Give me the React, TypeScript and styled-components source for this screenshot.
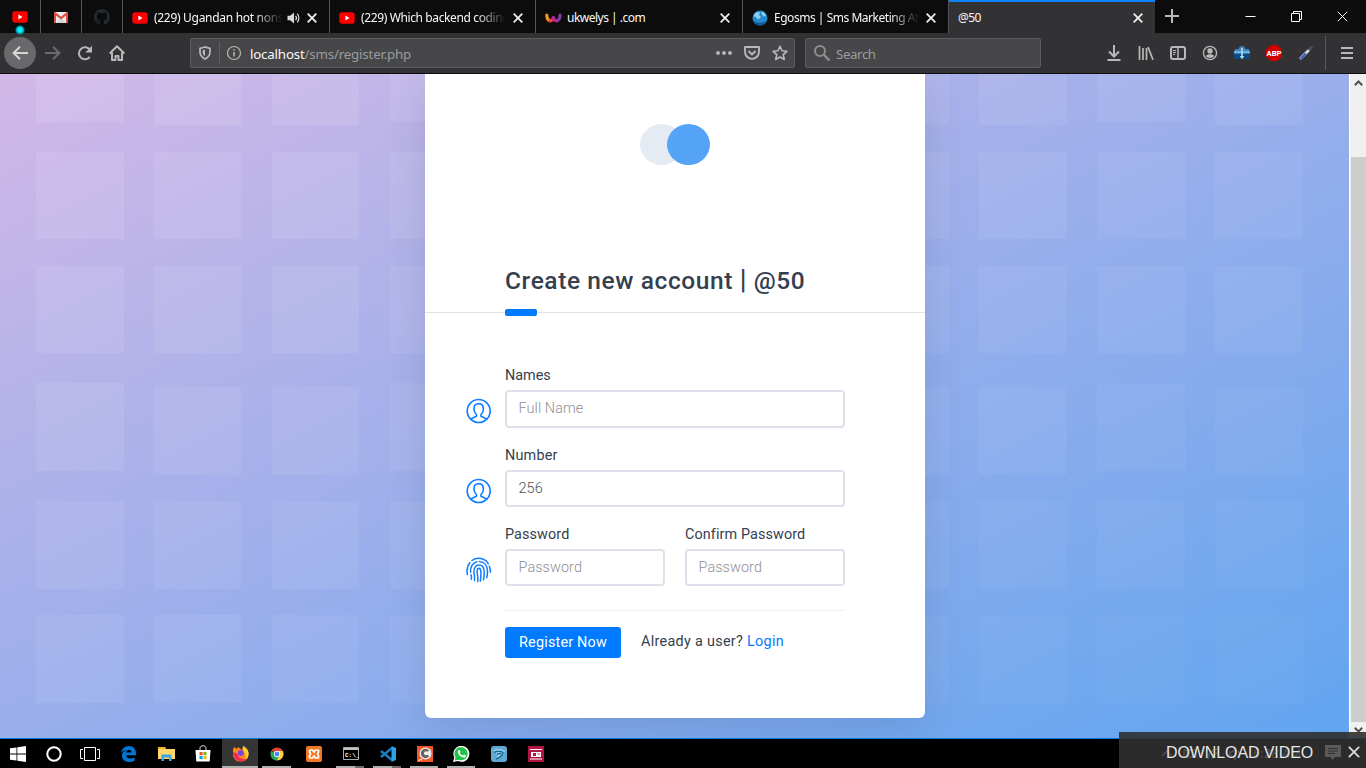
import React from "react";
import styled, { createGlobalStyle, css } from "styled-components";

const GlobalStyle = createGlobalStyle`
  * { box-sizing: border-box; }
  html, body { margin: 0; padding: 0; overflow: hidden; }
  svg { display: block; flex: none; }
`;

const uiFont = `"Noto Sans", "Open Sans", sans-serif`;

const Screen = styled.div`
  width: 1366px;
  height: 768px;
  display: flex;
  flex-direction: column;
  position: relative;
  overflow: hidden;
  font-family: ${uiFont};
`;

/* ---------- tab strip ---------- */

const TabStrip = styled.div`
  height: 33px;
  flex: none;
  display: flex;
  background: #0c0c0d;
`;

const PinnedTab = styled.div`
  width: 41px;
  border-right: 1px solid #565658;
  display: flex;
  align-items: center;
  justify-content: center;
  padding-top: 1px;
  position: relative;
`;

const PinnedDot = styled.i`
  position: absolute;
  left: 15px;
  top: 25px;
  width: 10px;
  height: 10px;
  border-radius: 50%;
  background: radial-gradient(circle, #00f0ff 0 30%, #008c99 55%, transparent 72%);
`;

const Tab = styled.div<{ $width: number; $active?: boolean }>`
  width: ${(p) => p.$width}px;
  display: flex;
  align-items: center;
  padding: 2px 12px 0 9px;
  border-right: 1px solid #565658;
  ${(p) =>
    p.$active &&
    css`
      background: #323234;
      border-right: 0;
      box-shadow: inset 0 2px #0a84ff;
    `}
`;

const TabTitle = styled.span<{ $fade?: boolean; $spacing?: number; $gap?: number }>`
  flex: 1;
  min-width: 0;
  margin-right: ${(p) => p.$gap ?? 0}px;
  overflow: hidden;
  white-space: nowrap;
  font-size: 12px;
  line-height: 18px;
  color: #f9f9fa;
  letter-spacing: ${(p) => p.$spacing ?? -0.3}px;
  ${(p) => p.$fade && css`mask-image: linear-gradient(to left, transparent, #000 30px);`}
`;

const TabIcon = styled.span`
  width: 16px;
  margin-right: 6px;
  display: flex;
  justify-content: center;
  flex: none;
`;

const SpeakerSlot = styled.span`
  padding: 0 6px 0 4px;
`;

const WindowControls = styled.div`
  margin-left: auto;
  display: flex;
  align-items: center;
  gap: 35px;
  padding: 0 18px 1px 0;
`;

const NewTab = styled.div`
  padding: 9px 0 0 10px;
`;

/* ---------- navigation bar ---------- */

const NavBar = styled.div`
  height: 41px;
  flex: none;
  display: flex;
  align-items: center;
  background: #323234;
  border-bottom: 1px solid #0c0c0d;
`;

const NavButtons = styled.div`
  width: 190px;
  padding-left: 4px;
  display: flex;
  align-items: center;
`;

const BackButton = styled.div`
  width: 32px;
  height: 32px;
  border-radius: 50%;
  background: #69696b;
  display: flex;
  align-items: center;
  justify-content: center;
  margin-right: 8px;
`;

const NavIcon = styled.div<{ $width?: number }>`
  width: ${(p) => p.$width ?? 32}px;
  display: flex;
  justify-content: center;
`;

const Field = styled.div<{ $width: number; $search?: boolean }>`
  width: ${(p) => p.$width}px;
  height: 30px;
  display: flex;
  align-items: center;
  background: #474749;
  border: 1px solid #5d5d5f;
  border-radius: 2px;
  padding: 0 6px 0 8px;
  margin-left: ${(p) => (p.$search ? 10 : 0)}px;
  font-size: 13.3px;
  color: #9c9c9e;
`;

const FieldDivider = styled.i`
  width: 1px;
  height: 22px;
  background: #5c6063;
  margin: 0 6px 0 8px;
`;

const Url = styled.span`
  flex: 1;
  margin-left: 8px;
  padding-top: 2px;
  letter-spacing: -0.18px;
  em { font-style: normal; color: #f9f9fa; }
`;

const UrlActions = styled.div`
  display: flex;
  align-items: center;
  gap: 12px;
`;

const SearchHint = styled.span`
  margin-left: 6px;
  padding-top: 2px;
  letter-spacing: -0.4px;
`;

const Toolbar = styled.div`
  margin-left: auto;
  display: flex;
  align-items: center;
`;

const MenuSlot = styled.div`
  height: 34px;
  border-left: 1px solid #5a5a5c;
  margin-left: 3px;
  padding: 0 13px 0 15px;
  display: flex;
  align-items: center;
`;

/* ---------- web page ---------- */

const Viewport = styled.div`
  height: 664px;
  flex: none;
  display: flex;
`;

const Page = styled.main`
  width: 1349px;
  display: grid;
  overflow: hidden;
  background: linear-gradient(to bottom right, #d2b8e7, #61a5f0);
  > * { grid-area: 1 / 1; }
`;

const Pattern = styled.div`
  display: flex;
  gap: 30.3px;
  padding-left: 36px;
`;

const PatternColumn = styled.div`
  width: 87.6px;
  flex: none;
`;

const Square = styled.div<{ $gap: number; $height: number; $alpha: number }>`
  margin-top: ${(p) => p.$gap}px;
  height: ${(p) => p.$height}px;
  background: rgba(255, 255, 255, ${(p) => p.$alpha});
`;

const Card = styled.section`
  width: 500px;
  height: 644px;
  margin-left: 425px;
  background: #fff;
  border-radius: 0 0 6px 6px;
  box-shadow: 0 10px 40px rgba(40, 50, 90, 0.15);
  font-family: Roboto, sans-serif;
  color: #35404f;
  z-index: 1;
`;

const CardHeader = styled.header`
  height: 239px;
  border-bottom: 1px solid #e2e3e5;
  display: flex;
  flex-direction: column;
  padding: 50px 80px 0;
`;

const Logo = styled.div`
  align-self: center;
  flex: none;
  height: 139px;
`;

const Title = styled.h1`
  margin: 0;
  flex: none;
  height: 38px;
  font-size: 24.5px;
  font-weight: 500;
  line-height: 36px;
  letter-spacing: 0.6px;
  white-space: nowrap;
`;

const Pipe = styled.span`
  font-size: 27px;
  line-height: 0;
`;

const Accent = styled.i`
  display: block;
  flex: none;
  width: 32px;
  height: 7px;
  margin-top: 8px;
  border-radius: 2px;
  background: #007bff;
`;

const Form = styled.div`
  padding: 50px 80px 0 41px;
`;

const FormRow = styled.div<{ $height: number }>`
  height: ${(p) => p.$height}px;
  display: flex;
  gap: 20px;
`;

const RowIcon = styled.div`
  width: 26px;
  margin-right: -7px;
  padding-top: 35px;
`;

const Control = styled.label`
  flex: 1;
  min-width: 0;
  display: flex;
  flex-direction: column;
`;

const LabelText = styled.span<{ $spacing: number }>`
  font-size: 14.4px;
  line-height: 22px;
  padding-top: 2px;
  margin-bottom: 3px;
  white-space: nowrap;
  letter-spacing: ${(p) => p.$spacing}px;
`;

const Input = styled.input<{ $height?: number; $spacing?: number }>`
  width: 100%;
  height: ${(p) => p.$height ?? 37}px;
  border: 2px solid #dde1ec;
  border-radius: 4px;
  padding: 0 12px 1px 11.5px;
  outline: 0;
  background: #fff;
  color: #495057;
  font: 300 14.4px Roboto, sans-serif;
  letter-spacing: ${(p) => p.$spacing ?? 0.1}px;
  &::placeholder { color: #8f8f93; opacity: 1; }
`;

const Actions = styled.div`
  margin-left: 39px;
  border-top: 1px solid #eeeff1;
  padding-top: 16px;
  display: flex;
  font-size: 14.4px;
`;

const Submit = styled.button`
  width: 116px;
  height: 31px;
  border: 0;
  border-radius: 3px;
  background: #007bff;
  color: #fff;
  padding: 0;
  font: 400 14.4px Roboto, sans-serif;
  letter-spacing: 0.2px;
`;

const LoginHint = styled.p`
  margin: 0 0 0 20px;
  line-height: 29px;
  letter-spacing: 0.3px;
  a { color: #007bff; }
`;

const Scrollbar = styled.div`
  width: 17px;
  background: #f0f0f0;
  border-left: 1px solid #fff;
  display: flex;
  flex-direction: column;
  align-items: center;
  justify-content: space-between;
  padding: 6px 0 5px;
`;

const Thumb = styled.div`
  width: 15px;
  height: 565px;
  margin-top: 65px;
  background: #cdcdcd;
`;

/* ---------- taskbar ---------- */

const Taskbar = styled.footer`
  height: 30px;
  background: #000;
  border-top: 1px solid #0078d7;
  display: flex;
`;

const TaskItem = styled.div<{ $width?: number; $active?: boolean; $running?: boolean; $stacked?: boolean }>`
  width: ${(p) => p.$width ?? 37}px;
  flex: none;
  display: flex;
  align-items: center;
  justify-content: center;
  position: relative;
  ${(p) => p.$active && css`background: #353535;`}
  ${(p) =>
    (p.$running || p.$active) &&
    css`
      &::after {
        content: "";
        position: absolute;
        bottom: 0;
        left: ${p.$active ? 0 : 4}px;
        right: ${p.$active ? 0 : 5}px;
        height: 2px;
        background: ${p.$stacked ? "linear-gradient(to right, #b0b0b0 19px, #6c6c6c 19px)" : "#b0b0b0"};
      }
    `}
`;

const DownloadBar = styled.div`
  position: absolute;
  right: 0;
  bottom: 0;
  width: 247px;
  height: 36px;
  background: rgba(48, 48, 48, 0.9);
`;

const Tray = styled.div`
  position: absolute;
  left: 42px;
  top: 13px;
  display: flex;
  align-items: center;
  gap: 10px;
  color: #505050;
  font-size: 12px;
  line-height: 17px;
  letter-spacing: 0.4px;
`;

const DownloadLabel = styled.div`
  position: absolute;
  left: 47px;
  top: 10px;
  font: 16px/22px "Liberation Sans", sans-serif;
  letter-spacing: -0.1px;
  color: #e6e6e6;
  white-space: nowrap;
`;

const DownloadIcons = styled.div`
  position: absolute;
  right: 6px;
  top: 12px;
  display: flex;
  align-items: center;
  gap: 7px;
`;

/* ---------- icons ---------- */

const Cross = ({ size = 10, color = "#eee", width = 1.8 }: { size?: number; color?: string; width?: number }) => (
  <svg width={size} height={size} viewBox="0 0 10 10" stroke={color} strokeWidth={width} fill="none">
    <path d="M.7.7l8.6 8.6M9.3.7L.7 9.3" />
  </svg>
);

const YouTube = () => (
  <svg width="16" height="12" viewBox="0 0 16 12">
    <rect x=".3" y=".3" width="15.4" height="11.4" rx="3" fill="#f00" />
    <path d="M6.4 3.6v4.8L10.5 6z" fill="#fff" />
  </svg>
);

const Gmail = () => (
  <svg width="14" height="11" viewBox="0 0 14 11">
    <rect width="14" height="11" rx="1" fill="#ececec" />
    <path d="M2 11l5-5 5 5z" fill="#d5d5d5" />
    <path d="M0 1v10h2V3.500l5 4 5-4V11h2V1c0-.7-.8-1.200-1.400-.8L7 4.800 1.400.2C.8-.2 0 .3 0 1z" fill="#dd4b3e" />
  </svg>
);

const GitHub = () => (
  <svg width="16" height="16" viewBox="0 0 16 16" fill="#24292e">
    <path d="M8 0C3.58 0 0 3.58 0 8c0 3.54 2.29 6.53 5.47 7.59.4.07.55-.17.55-.38 0-.19-.01-.82-.01-1.49-2.01.37-2.53-.49-2.69-.94-.09-.23-.48-.94-.82-1.13-.28-.15-.68-.52-.01-.53.63-.01 1.08.58 1.23.82.72 1.21 1.87.87 2.33.66.07-.52.28-.87.51-1.07-1.78-.2-3.64-.89-3.64-3.95 0-.87.31-1.59.82-2.15-.08-.2-.36-1.02.08-2.12 0 0 .67-.21 2.2.82a7.6 7.6 0 014 0c1.53-1.04 2.2-.82 2.2-.82.44 1.1.16 1.92.08 2.12.51.56.82 1.27.82 2.15 0 3.07-1.87 3.75-3.65 3.95.29.25.54.73.54 1.48 0 1.07-.01 1.93-.01 2.2 0 .21.15.46.55.38A8 8 0 0016 8c0-4.42-3.58-8-8-8z" />
  </svg>
);

const Speaker = () => (
  <svg width="14" height="14" viewBox="0 0 14 14" fill="none" stroke="#d7d7d8" strokeWidth="1.2">
    <path d="M.5 4.800h2.600L7 1.500v11L3.100 9.200H.5z" fill="#d7d7d8" stroke="none" />
    <path d="M8.500 4.800c1.200 1.200 1.200 3.200 0 4.400M10.200 2.800c2.300 2.200 2.300 6.200 0 8.400" />
  </svg>
);

const Ukwelys = () => (
  <svg width="17" height="10" viewBox="0 0 17 10" fill="none" strokeWidth="3.2" strokeLinecap="round">
    <path d="M1.800 2c0 3 1 5 3 5.700" stroke="#f7931e" />
    <path d="M11.800 7.700c2-.5 3.200-3 3.200-5.700" stroke="#7b3fa0" />
    <path d="M5 7.800c1.800 0 3.200-1.500 3.400-3" stroke="#e8413c" />
    <path d="M8.500 4.800C8.800 6.500 10 7.800 11.800 7.800" stroke="#b5259a" />
  </svg>
);

const Globe = () => (
  <svg width="16" height="16" viewBox="0 0 16 16">
    <circle cx="8" cy="8" r="7.500" fill="#2388cc" />
    <path d="M2.500 4l2.500-2 3 .5-1 2.500 2 2-3 2.500-2-2.500-2.500-.5zM9.500 1.500l3 1.500L14 6l-2.500.5L9.500 4z" fill="#8fcdf0" />
    <path d="M2 11q6 4 12 0-2 4.500-6 4.500T2 11z" fill="#12569a" />
  </svg>
);

const Person = () => (
  <svg width="26" height="26" viewBox="0 0 26 26" fill="none" stroke="#0f7dff" strokeWidth="1.600">
    <circle cx="12.700" cy="13" r="11.500" />
    <path d="M4.600 21l5.400-2.500c.7-.4.800-1.300.2-2.100-1.500-1.300-2.200-3.200-2.200-5.600 0-3.600 1.700-5.100 4.700-5.100s4.700 1.500 4.700 5.100c0 2.400-.7 4.300-2.200 5.600-.6.800-.5 1.700.2 2.100l5.400 2.500" />
  </svg>
);

const Fingerprint = () => (
  <svg width="26" height="26" viewBox="0 0 26 26" fill="none" stroke="#0f7dff" strokeWidth="1.500" strokeLinecap="round">
    <path d="M1.300 17.500c-.8-5 0-8.700 2.500-11.800M6 3.500c5.300-4 13.200-2.300 16.300 3.300M23.300 9.200c.8 1.800 1.200 4 1.100 6" />
    <path d="M4.600 15.200c-.5-5 2-9.500 6.300-10.500M13.400 4.500c5.300.3 8 4.400 8.100 9.400 0 2.600-.2 4.700-.7 6.800M5 17.800c.5 1.700.6 3 .4 4.500" />
    <path d="M8.500 23.400c.5-3-.4-5.800-.6-8.200-.2-4 1.800-7.200 5-7.200s5.100 2.500 5.300 6.500c.1 3-.1 5.600-.7 8.400" />
    <path d="M11.700 24.500c.6-4-.5-6.500-.6-9.700 0-2.200.6-3.500 1.800-3.500 1.300 0 1.900 1.300 2 3.500.2 3.400 0 6.400-.6 9.400" />
  </svg>
);

const Chevron = ({ down }: { down?: boolean }) => (
  <svg width="9" height="6" viewBox="0 0 9 6" fill="none" stroke="#505050" strokeWidth="2">
    <path d={down ? "M.8.8l3.700 3.700L8.200.8" : "M.8 5.200l3.700-3.700 3.700 3.700"} />
  </svg>
);

const line = { fill: "none", stroke: "#b9b9bb", strokeWidth: 2 } as const;

/* rows of the translucent square pattern: [gap above, height] */
const baseRows = [[0, 51], [26.5, 87.5], [26.5, 87.5], [34, 87.5], [26.5, 87.5], [26, 88]];
const raisedRows = [[0, 47.5], [30, 87.5], [26.5, 87.5], [30, 87.5], [30.5, 87.5], [26, 88]];

/* the squares fade out towards the bottom right corner */
const squareAlpha = (col: number, row: number) => 0.1 - 0.0036 * col - 0.007 * row;

export default function App() {
  return (
    <Screen>
      <GlobalStyle />
      <TabStrip>
        <PinnedTab><YouTube /><PinnedDot /></PinnedTab>
        <PinnedTab><Gmail /></PinnedTab>
        <PinnedTab><GitHub /></PinnedTab>
        <Tab $width={207}>
          <TabIcon><YouTube /></TabIcon>
          <TabTitle $fade $spacing={-0.3}>(229) Ugandan hot nonstop</TabTitle>
          <SpeakerSlot><Speaker /></SpeakerSlot>
          <Cross />
        </Tab>
        <Tab $width={206}>
          <TabIcon><YouTube /></TabIcon>
          <TabTitle $fade $spacing={-0.38} $gap={7}>(229) Which backend coding l</TabTitle>
          <Cross />
        </Tab>
        <Tab $width={207}>
          <TabIcon><Ukwelys /></TabIcon>
          <TabTitle $spacing={-0.5}>ukwelys | .com</TabTitle>
          <Cross />
        </Tab>
        <Tab $width={206}>
          <TabIcon><Globe /></TabIcon>
          <TabTitle $fade $spacing={-0.47} $gap={7}>Egosms | Sms Marketing At it</TabTitle>
          <Cross />
        </Tab>
        <Tab $width={206} $active>
          <TabTitle $spacing={-0.6}>@50</TabTitle>
          <Cross />
        </Tab>
        <NewTab>
          <svg width="14" height="14" viewBox="0 0 14 14" {...line}><path d="M7 0v14M0 7h14" /></svg>
        </NewTab>
        <WindowControls>
          <svg width="11" height="11" viewBox="0 0 11 11" stroke="#fff"><path d="M.5 5.500h10" /></svg>
          <svg width="11" height="11" viewBox="0 0 11 11" fill="none" stroke="#fff"><path d="M.5 2.500h8v8h-8zM2.500 2.500v-2h8v8h-2" /></svg>
          <Cross size={11} color="#fff" width={0.9} />
        </WindowControls>
      </TabStrip>

      <NavBar>
        <NavButtons>
          <BackButton>
            <svg width="16" height="14" viewBox="0 0 16 14" {...line} stroke="#d7d7d8"><path d="M16 7H1.500M8 .8L1.600 7 8 13.200" /></svg>
          </BackButton>
          <NavIcon $width={18}>
            <svg width="16" height="14" viewBox="0 0 16 14" {...line} stroke="#6c6c6e"><path d="M0 7h14.500M8 .8L14.400 7 8 13.200" /></svg>
          </NavIcon>
          <NavIcon $width={46}>
            <svg width="16" height="16" viewBox="0 0 16 16" {...line}><path d="M12.800 11.800A6 6 0 1 1 13 5" /><path d="M15 .8v6.700H8.300z" fill="#b9b9bb" stroke="none" /></svg>
          </NavIcon>
          <NavIcon $width={18}>
            <svg width="16" height="16" viewBox="0 0 16 16" {...line}><path d="M.7 8.500L8 1.300l7.300 7.200M3 7.500V15h3.500v-4h3v4H13V7.500" strokeLinejoin="round" /></svg>
          </NavIcon>
        </NavButtons>
        <Field $width={605}>
          <svg width="12" height="14" viewBox="0 0 12 14" {...line} strokeWidth="1.7"><path d="M6 1L1 2.500V6c0 3.500 2 5.500 5 7 3-1.500 5-3.500 5-7V2.500z" /><path d="M6 3.700v6.600c-1.700-1.200-2.400-2.300-2.400-4.500V4.400z" fill="#b9b9bb" stroke="none" /></svg>
          <FieldDivider />
          <svg width="16" height="16" viewBox="0 0 16 16" {...line} strokeWidth="1.2"><circle cx="8" cy="8" r="6.500" /><path d="M8 7v4.500M8 4.200v1.500" strokeWidth="1.5" /></svg>
          <Url><em>localhost</em>/sms/register.php</Url>
          <UrlActions>
            <svg width="16" height="4" viewBox="0 0 16 4" fill="#b9b9bb"><circle cx="2" cy="2" r="1.900" /><circle cx="8" cy="2" r="1.900" /><circle cx="14" cy="2" r="1.900" /></svg>
            <svg width="16" height="14" viewBox="0 0 16 14" {...line} strokeWidth="1.9"><path d="M1 1h14v4.500c0 4.200-3 7.400-7 7.400S1 9.700 1 5.500z" strokeLinejoin="round" /><path d="M4.400 5L8 8.400 11.600 5" /></svg>
            <svg width="16" height="16" viewBox="0 0 16 16" {...line} strokeWidth="1.6"><path d="M8 1.300l2 4.500 4.900.5-3.700 3.300 1.100 4.900L8 12l-4.300 2.500 1.100-4.900L1.100 6.300 6 5.800z" strokeLinejoin="round" /></svg>
          </UrlActions>
        </Field>
        <Field $width={236} $search>
          <svg width="16" height="16" viewBox="0 0 16 16" {...line} stroke="#8f8f91"><circle cx="6" cy="6" r="5" /><path d="M9.500 9.500l6 6" strokeWidth="2.3" /></svg>
          <SearchHint>Search</SearchHint>
        </Field>
        <Toolbar>
          <NavIcon><svg width="14" height="16" viewBox="0 0 14 16" {...line}><path d="M7 0v11M2 6.500l5 5 5-5M.5 15h13" /></svg></NavIcon>
          <NavIcon><svg width="16" height="14" viewBox="0 0 16 14" {...line}><path d="M1.500 0v14M5 2v12M8.500 2v12M10 1l5 12.700" strokeWidth="1.7" /></svg></NavIcon>
          <NavIcon><svg width="16" height="14" viewBox="0 0 16 14" {...line}><rect x="1" y="1" width="14" height="12" rx="2" /><path d="M8 1v12" strokeWidth="1.5" /><path d="M3 4.500h3M3 6.500h3M3 8.500h2" strokeWidth="1" /></svg></NavIcon>
          <NavIcon><svg width="16" height="16" viewBox="0 0 16 16" {...line} strokeWidth="1.3"><circle cx="8" cy="8" r="6.600" /><circle cx="8" cy="6" r="2.700" fill="#b9b9bb" stroke="none" /><path d="M3.700 11c2-2.300 6.600-2.300 8.600 0-2 2.600-6.600 2.600-8.600 0z" fill="#b9b9bb" stroke="none" /></svg></NavIcon>
          <NavIcon><svg width="16" height="14" viewBox="0 0 16 14"><path d="M1 3h3.500Q5.500 0 8 0t3.500 3H15v3H1z" fill="#3d83bd" /><path d="M0 5.500h16V13H0z" fill="#0c4a80" /><path d="M0 5h16v2.500H0z" fill="#66b4df" /><path d="M7.200 2h1.600v8h1.500L8 13.200 5.700 10h1.500z" fill="#b5dcf2" /></svg></NavIcon>
          <NavIcon>
            <svg width="16" height="16" viewBox="0 0 16 16"><path d="M4.700 0h6.600L16 4.700v6.600L11.300 16H4.700L0 11.300V4.700z" fill="#d00000" /><text x="8" y="10.800" textAnchor="middle" fill="#fff" fontFamily="Roboto, sans-serif" fontWeight="700" fontSize="7.700">ABP</text></svg>
          </NavIcon>
          <NavIcon><svg width="14" height="14" viewBox="0 0 14 14" fill="none" strokeLinecap="round"><path d="M9 5l3.500-3.500" stroke="#4c5054" strokeWidth="2.6" /><path d="M2 12l7-7" stroke="#c6d0da" strokeWidth="3" /><path d="M2.300 12l4-4" stroke="#315dcb" strokeWidth="2" /></svg></NavIcon>
          <MenuSlot>
            <svg width="12" height="12" viewBox="0 0 12 12" {...line}><path d="M0 1h12M0 6h12M0 11h12" /></svg>
          </MenuSlot>
        </Toolbar>
      </NavBar>

      <Viewport>
        <Page>
          <Pattern>
            {Array.from({ length: 11 }, (_, col) => (
              <PatternColumn key={col}>
                {(col % 3 === 0 ? raisedRows : baseRows).map(([gap, height], row) => (
                  <Square key={row} $gap={gap} $height={height} $alpha={squareAlpha(col, row)} />
                ))}
              </PatternColumn>
            ))}
          </Pattern>
          <Card>
            <CardHeader>
              <Logo>
                <svg width="70" height="41" viewBox="0 0 70 41"><ellipse cx="21.500" cy="20.500" rx="21.500" ry="20.500" fill="#e4ebf3" /><ellipse cx="48.500" cy="20.500" rx="21.500" ry="20.500" fill="#54a3f7" /></svg>
              </Logo>
              <Title>Create new account <Pipe>|</Pipe> @50</Title>
              <Accent />
            </CardHeader>
            <Form>
              <FormRow $height={80}>
                <RowIcon><Person /></RowIcon>
                <Control><LabelText $spacing={0}>Names</LabelText><Input $height={38} placeholder="Full Name" /></Control>
              </FormRow>
              <FormRow $height={79}>
                <RowIcon><Person /></RowIcon>
                <Control><LabelText $spacing={0.2}>Number</LabelText><Input defaultValue="256" /></Control>
              </FormRow>
              <FormRow $height={88}>
                <RowIcon><Fingerprint /></RowIcon>
                <Control><LabelText $spacing={0.1}>Password</LabelText><Input placeholder="Password" /></Control>
                <Control><LabelText $spacing={0.1}>Confirm Password</LabelText><Input placeholder="Password" /></Control>
              </FormRow>
              <Actions>
                <Submit>Register Now</Submit>
                <LoginHint>Already a user? <a>Login</a></LoginHint>
              </Actions>
            </Form>
          </Card>
        </Page>
        <Scrollbar>
          <Chevron />
          <Thumb />
          <Chevron down />
        </Scrollbar>
      </Viewport>

      <Taskbar>
        <TaskItem $width={36}>
          <svg width="16" height="16" viewBox="0 0 16 16" fill="#fff"><path d="M0 2.300l6.500-.9v6.200H0zM7.300 1.300L16 0v7.600H7.300zM0 8.400h6.500v6.200L0 13.700zM7.300 8.400H16V16l-8.700-1.300z" /></svg>
        </TaskItem>
        <TaskItem $width={36}><svg width="16" height="16" viewBox="0 0 16 16" fill="none" stroke="#fff" strokeWidth="2"><circle cx="8" cy="8" r="6.700" /></svg></TaskItem>
        <TaskItem $width={36}><svg width="20" height="14" viewBox="0 0 20 14" fill="none" stroke="#fff"><path d="M4.500.5h11v13h-11zM3 2.500H.5v9H3M17 2.500h2.500v9H17" /></svg></TaskItem>
        <TaskItem $width={41}>
          <svg width="15" height="16" viewBox="0 0 15 16" fill="#0078d7"><path d="M0 7.300C.7 3 3.600 0 7.800 0 12.500 0 15 3.500 15 7.300v2H5c.2 3 4.200 4.400 8.600 2.200v3.300C8 17.600 1 15.500 1 9.800 1 7 2.700 5 5.300 4 3 4.200 1.200 5.400 0 7.300zM5 6.500h5.500C10.500 2.700 5.600 2.700 5 6.500z" /></svg>
        </TaskItem>
        <TaskItem $width={35}><svg width="17" height="15" viewBox="0 0 17 15"><path d="M0 1h7l1 2h9v10H0z" fill="#ffd869" /><path d="M0 1h7l1 2H0z" fill="#e9b32c" /><path d="M3.500 15V8.500h10V15H11v-3.500H6V15z" fill="#39a7e8" /></svg></TaskItem>
        <TaskItem $width={38}><svg width="16" height="17" viewBox="0 0 16 17"><path d="M5 5V3c0-3 6-3 6 0v2" stroke="#ddd" fill="none" /><path d="M.5 5h15l-.8 11.500H1.300z" fill="#fff" /><path d="M4.500 7H7.600v3.200H4.500z" fill="#f25022" /><path d="M8.400 7h3.100v3.200H8.400z" fill="#7fba00" /><path d="M4.500 11h3.100v3.200H4.500z" fill="#00a4ef" /><path d="M8.400 11h3.100v3.200H8.400z" fill="#ffb900" /></svg></TaskItem>
        <TaskItem $active $width={36}>
          <svg width="17" height="17" viewBox="0 0 17 17"><path d="M1 5l1-3 3 2 1-2 4 3 1-4c4 2 6 5 5.500 9A8 8 0 0 1 1 11z" fill="#ff8a1c" /><path d="M11 1c4 2 6 5 5.500 9-.5 3-3 5.500-5 6 3-3 3-7 0-9z" fill="#ffcf32" /><path d="M1 7c0 5 3 9.500 8 9.500s6-3 6-3c-4 2-9-.5-9-4.500z" fill="#f22b55" /><circle cx="8.800" cy="8" r="3" fill="#7848dc" /></svg>
        </TaskItem>
        <TaskItem $running $width={38}>
          <svg width="14" height="14" viewBox="0 0 16 16"><path d="M8 8L1.600 4A7.500 7.500 0 0 1 14.500 4.300z" fill="#e04032" /><path d="M1.400 4.300A7.500 7.500 0 0 0 7.500 15.500L11 10z" fill="#24a55a" /><path d="M14.600 4.500A7.500 7.500 0 0 1 7.500 15.500L11 9 9 4.500z" fill="#ffcd40" /><circle cx="8" cy="8" r="3.600" fill="#fff" /><circle cx="8" cy="8" r="2.800" fill="#4587f3" /></svg>
        </TaskItem>
        <TaskItem $width={36}><svg width="16" height="16" viewBox="0 0 16 16"><rect width="16" height="16" rx="2" fill="#f37623" /><path d="M4.500 4h2l1.500 2 1.500-2h2q1.500 0 1 2L11.500 8l1 2q.5 2-1 2h-2L8 10l-1.500 2h-2q-1.500 0-1-2l1-2-1-2q-.5-2 1-2z" fill="none" stroke="#fff" strokeWidth="1.700" /></svg></TaskItem>
        <TaskItem $running $stacked $width={37}><svg width="16" height="13" viewBox="0 0 16 13"><path d="M.5.5h15v12H.5z" fill="#000" stroke="#a8adb2" /><path d="M1 1h14v2H1z" fill="#bcc2c8" /><text x="2" y="9.500" fontSize="6" fontFamily="Liberation Mono, monospace" fontWeight="700" fill="#fff">C:\_</text></svg></TaskItem>
        <TaskItem $running $stacked><svg width="16" height="16" viewBox="0 0 16 16" fill="none"><path d="M1 5l11 9M1 11L12 2" stroke="#147fc4" strokeWidth="2.400" /><path d="M11.500 0L16 2v12l-4.500 2z" fill="#2ba3ea" /></svg></TaskItem>
        <TaskItem $running><svg width="16" height="16" viewBox="0 0 16 16"><path d="M0 0h16v16H0z" fill="#f05a28" /><circle cx="8.500" cy="7.500" r="6" fill="#eee" /><circle cx="8.500" cy="7.500" r="4.700" fill="#666" /><path d="M13.500 3.500L8.500 7l5 4.500z" fill="#eee" /><circle cx="9" cy="7.300" r="2" fill="#eee" /><path d="M2 15c0-2 1.500-2 3-1" stroke="#fff" fill="none" /></svg></TaskItem>
        <TaskItem $running><svg width="17" height="16" viewBox="0 0 17 16"><path d="M0 16l1.300-4.400A8 8 0 1 1 4.800 15z" fill="#fff" /><path d="M1.700 14.500l.9-3a6.600 6.600 0 1 1 2.600 2.200z" fill="#22c14a" /><path d="M5.500 4.200c1-.8 1.500 0 2 1.700L6.800 7c.8 1.400 1.800 2.100 3.200 2.600l1-1.200 2 1c0 1.500-1.300 2.200-2.500 2C7 10.800 3.500 7 5.500 4.200z" fill="#fff" /></svg></TaskItem>
        <TaskItem><svg width="16" height="16" viewBox="0 0 16 16"><rect width="16" height="16" rx="3" fill="#5fa9d2" /><path d="M2 4.500q7-3 12 .5-2 6-9 8l2-4z" fill="#a5d3ec" /><path d="M3 6.500q5-2.500 9 0-1 4.500-7 6.500M6 8l4-.5" fill="none" stroke="#176aa0" strokeWidth="1.500" /></svg></TaskItem>
        <TaskItem><svg width="16" height="16" viewBox="0 0 16 16"><path d="M0 0h16v16H0z" fill="#b01642" /><path d="M2 3.500h12M2 13h12" stroke="#fff" /><path d="M3 6h10v5H3z" fill="#fff" /><path d="M5 7h3v3H5zM9.500 7.500h2.500v1H9.500z" fill="#b01642" /></svg></TaskItem>
      </Taskbar>

      <DownloadBar>
        <Tray>
          <svg width="12" height="7" viewBox="0 0 12 7" fill="none" stroke="#505050" strokeWidth="1.500"><path d="M1 6l5-5 5 5" /></svg>
          <svg width="14" height="9" viewBox="0 0 14 9" fill="none" stroke="#505050" strokeWidth="1.500"><path d="M1 1h12v7H1zM4 1v7" /></svg>
          <svg width="12" height="12" viewBox="0 0 12 12" fill="none" stroke="#505050" strokeWidth="1.500"><path d="M1 11A10 10 0 0 1 11 1M5 11a6 6 0 0 1 6-6" /></svg>
          <svg width="14" height="12" viewBox="0 0 14 12" fill="none" stroke="#505050" strokeWidth="1.500"><path d="M1 4h2l3-3v10L3 8H1zM9 3q3 3 0 6" /></svg>
          <span>6:28 AM</span>
        </Tray>
        <DownloadLabel>DOWNLOAD VIDEO</DownloadLabel>
        <DownloadIcons>
          <svg width="16" height="16" viewBox="0 0 16 16"><path d="M0 1h16v12h-6l-2.500 3L5.500 13H0z" fill="#5a5a5a" /><path d="M3 4.500h10M3 7h10M3 9.500h7" stroke="#303030" /></svg>
          <Cross size={12} color="#ddd" width={1.5} />
        </DownloadIcons>
      </DownloadBar>
    </Screen>
  );
}
